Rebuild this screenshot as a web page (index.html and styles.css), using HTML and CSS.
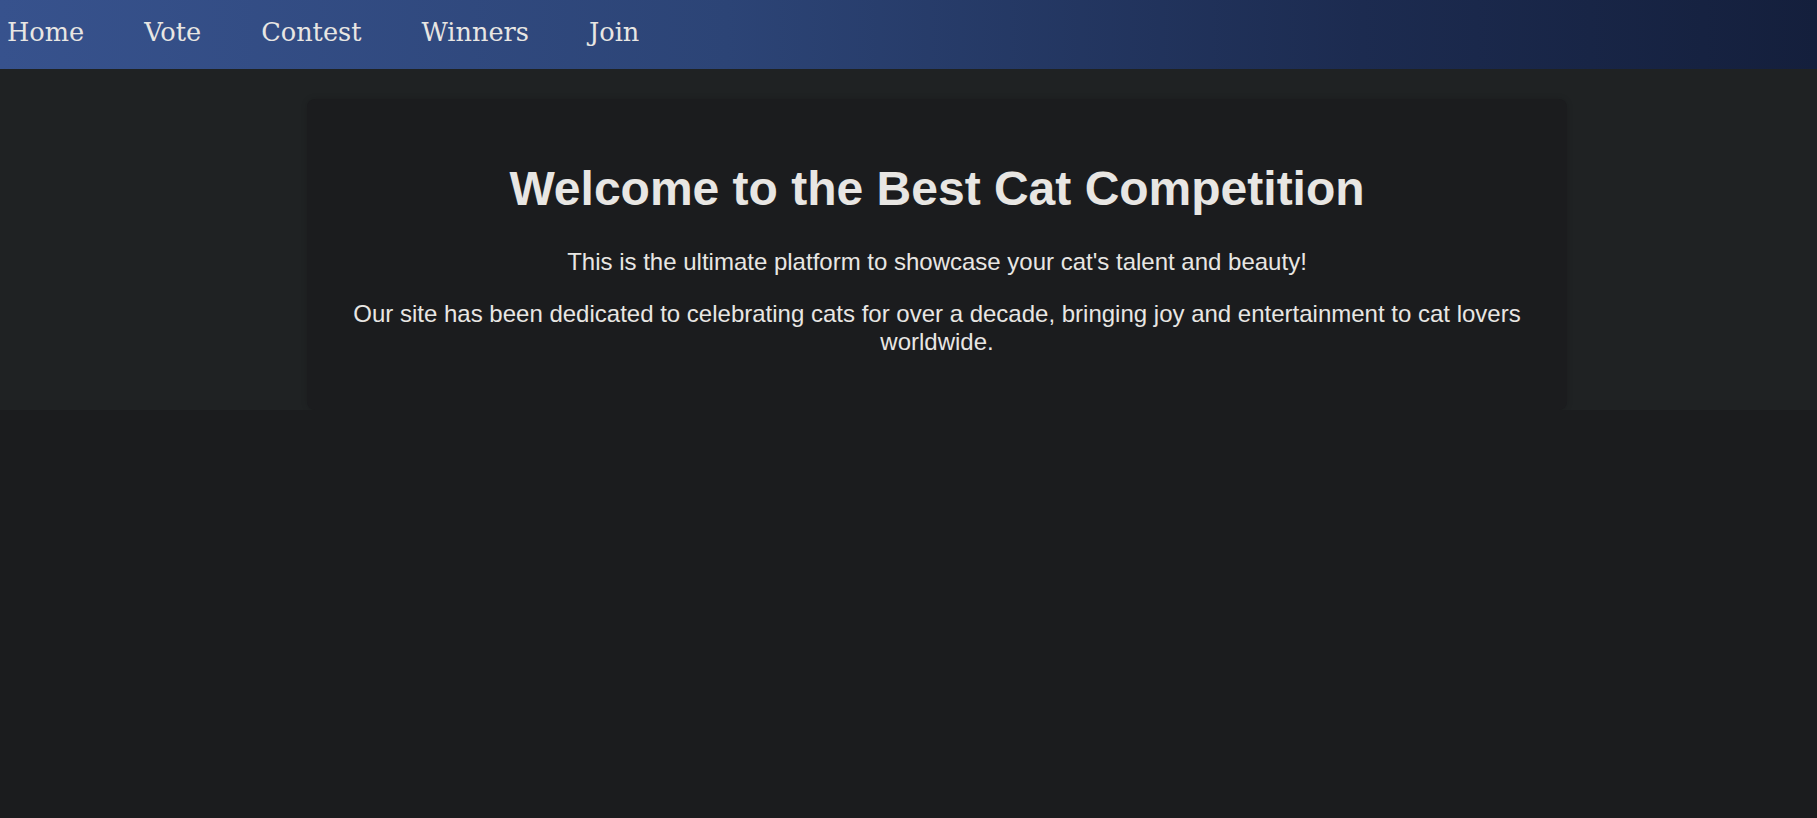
FILE: index.html
```html
<!DOCTYPE html>
<html lang="en">
<head>
<meta charset="utf-8">
<title>Best Cat Competition</title>
<link rel="stylesheet" href="styles.css">
</head>
<body>
<nav class="topnav">
  <a class="nav-link" href="#">Home</a>
  <a class="nav-link" href="#">Vote</a>
  <a class="nav-link" href="#">Contest</a>
  <a class="nav-link" href="#">Winners</a>
  <a class="nav-link" href="#">Join</a>
</nav>
<section class="hero">
  <div class="card">
    <h1 class="title">Welcome to the Best Cat Competition</h1>
    <p class="lead">This is the ultimate platform to showcase your cat's talent and beauty!</p>
    <p class="lead">Our site has been dedicated to celebrating cats for over a decade, bringing joy and entertainment to cat lovers worldwide.</p>
  </div>
</section>
</body>
</html>
```
FILE: styles.css
```css
html, body {
  margin: 0;
  padding: 0;
  background: #1b1c1e;
  color: #e8e6e3;
}
.topnav {
  box-sizing: border-box;
  display: flex;
  align-items: flex-start;
  gap: 60px;
  height: 69px;
  padding: 17px 0 0 7px;
  background: linear-gradient(90deg, #37528d 0%, #2c4476 40%, #1c2b50 75%, #141f3c 100%);
  font-family: "DejaVu Serif", serif;
  font-size: 25.6px;
}
.nav-link {
  color: #e8e6e3;
  text-decoration: none;
}
.hero {
  background: #1f2223;
  padding: 30px 0 0 57px;
  display: flex;
}
.card {
  width: 1200px;
  margin: 0 auto;
  padding: 30px;
  background: #1b1c1e;
  border-radius: 8px;
  box-shadow: 0 0 6px rgba(0, 0, 0, 0.15);
  text-align: center;
  font-family: "Liberation Sans", Arial, sans-serif;
}
.title {
  font-size: 48px;
  font-weight: bold;
  margin: 32px 0;
  color: #e8e6e3;
}
.lead {
  font-size: 24px;
  margin: 24px 0;
}
```
